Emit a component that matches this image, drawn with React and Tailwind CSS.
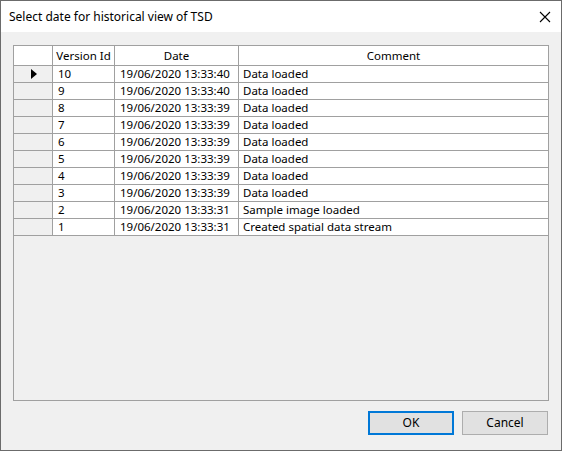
export default function App() {
  const rows = [
    ["10", "19/06/2020 13:33:40", "Data loaded"],
    ["9", "19/06/2020 13:33:40", "Data loaded"],
    ["8", "19/06/2020 13:33:39", "Data loaded"],
    ["7", "19/06/2020 13:33:39", "Data loaded"],
    ["6", "19/06/2020 13:33:39", "Data loaded"],
    ["5", "19/06/2020 13:33:39", "Data loaded"],
    ["4", "19/06/2020 13:33:39", "Data loaded"],
    ["3", "19/06/2020 13:33:39", "Data loaded"],
    ["2", "19/06/2020 13:33:31", "Sample image loaded"],
    ["1", "19/06/2020 13:33:31", "Created spatial data stream"],
  ];

  return (
    <div
      className="w-[562px] h-[451px] border border-[#6b6b6b] bg-[#f0f0f0] flex flex-col text-[11.5px] text-black"
      style={{ fontFamily: '"Noto Sans", "Open Sans", sans-serif' }}
    >
      <div className="h-[31px] bg-white flex items-center justify-between pl-[8px] pr-[10px] shrink-0">
        <span className="text-[12px]">Select date for historical view of TSD</span>
        <svg width="12" height="12" viewBox="0 0 12 12">
          <path d="M1 1L11 11M11 1L1 11" stroke="#000" strokeWidth="1.1" />
        </svg>
      </div>

      <div className="ml-[12px] mt-[13px] w-[536px] h-[356px] border border-[#a0a0a0] bg-[#f0f0f0] flex flex-col">
        <div className="flex h-[20px] bg-white border-b border-[#a0a0a0]">
          <div className="w-[39px] border-r border-[#a0a0a0]" />
          <div className="w-[62px] border-r border-[#a0a0a0] flex items-center justify-center">Version Id</div>
          <div className="w-[124px] border-r border-[#a0a0a0] flex items-center justify-center">Date</div>
          <div className="flex-1 flex items-center justify-center">Comment</div>
        </div>
        {rows.map((r, i) => (
          <div key={r[0]} className="flex h-[17px] border-b border-[#a0a0a0] leading-[16px]">
            <div className="w-[39px] border-r border-[#a0a0a0] bg-[#f0f0f0] flex items-center pl-[17px]">
              {i === 0 && (
                <svg width="6" height="10" viewBox="0 0 6 10">
                  <path d="M0 0L6 5L0 10Z" fill="#000" />
                </svg>
              )}
            </div>
            <div className="w-[62px] border-r border-[#a0a0a0] bg-white pl-[5px]">{r[0]}</div>
            <div className="w-[124px] border-r border-[#a0a0a0] bg-white pl-[5px]">{r[1]}</div>
            <div className="flex-1 bg-white pl-[4px]">{r[2]}</div>
          </div>
        ))}
      </div>

      <div className="flex justify-end gap-[8px] mt-[10px] mr-[13px]">
        <button className="w-[86px] h-[24px] bg-[#e1e1e1] border-2 border-[#0078d7] text-[12px]">OK</button>
        <button className="w-[86px] h-[24px] bg-[#e1e1e1] border border-[#adadad] text-[12px]">Cancel</button>
      </div>
    </div>
  );
}
